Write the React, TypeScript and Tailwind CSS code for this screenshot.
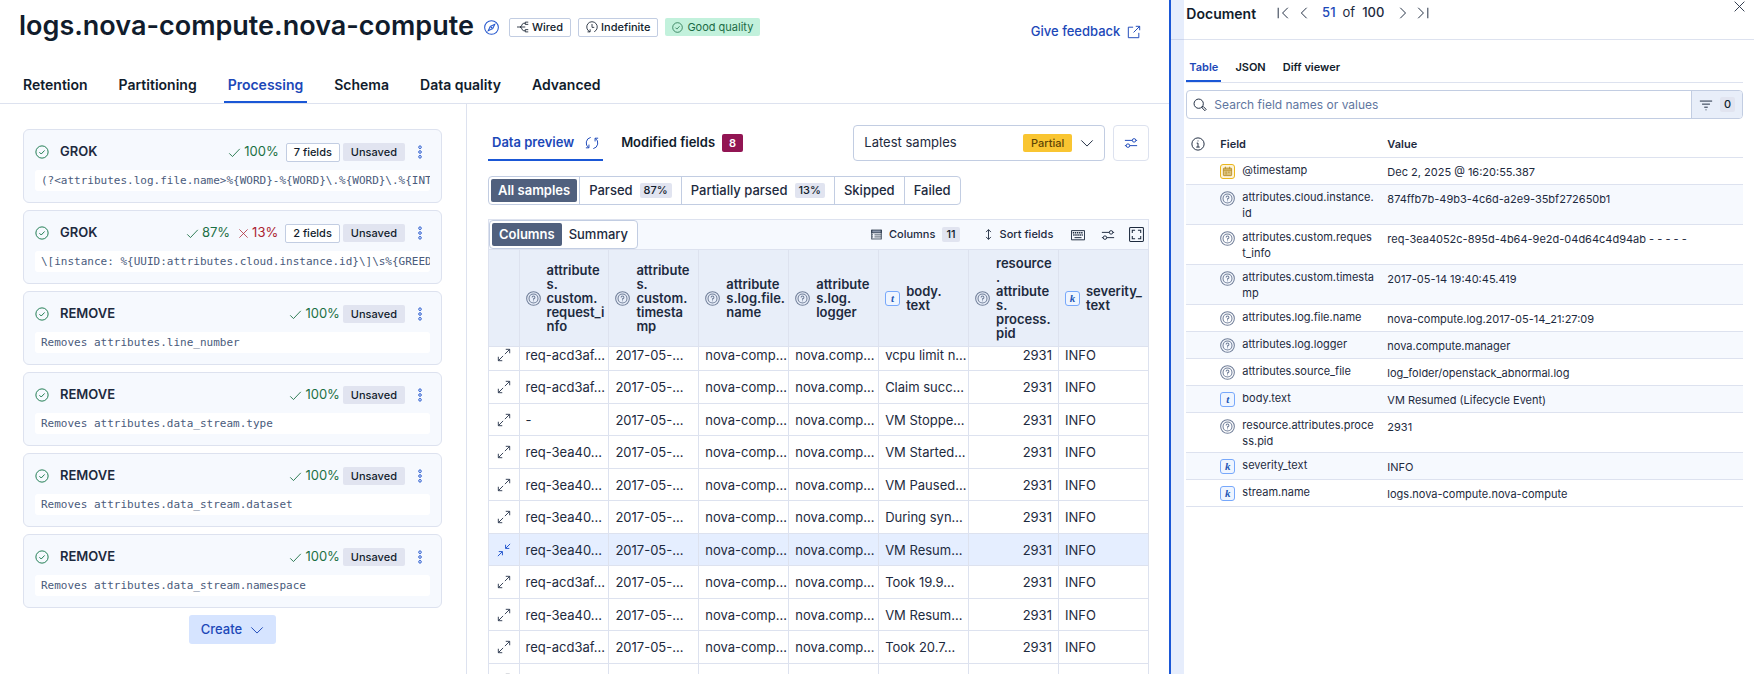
import type { ReactNode, SVGProps } from "react";

const steps = [
    { type: "GROK", parsed: "100%", failed: "", fields: "7 fields", detail: "(?<attributes.log.file.name>%{WORD}-%{WORD}\\.%{WORD}\\.%{INT" },
    { type: "GROK", parsed: "87%", failed: "13%", fields: "2 fields", detail: "\\[instance: %{UUID:attributes.cloud.instance.id}\\]\\s%{GREED" },
    { type: "REMOVE", parsed: "100%", failed: "", fields: "", detail: "Removes attributes.line_number" },
    { type: "REMOVE", parsed: "100%", failed: "", fields: "", detail: "Removes attributes.data_stream.type" },
    { type: "REMOVE", parsed: "100%", failed: "", fields: "", detail: "Removes attributes.data_stream.dataset" },
    { type: "REMOVE", parsed: "100%", failed: "", fields: "", detail: "Removes attributes.data_stream.namespace" },
];

const columns = [
    { label: "attribute\ns.\ncustom.\nrequest_i\nnfo", kind: "unknown" },
    { label: "attribute\ns.\ncustom.\ntimesta\nmp", kind: "unknown" },
    { label: "attribute\ns.log.file.\nname", kind: "unknown" },
    { label: "attribute\ns.log.\nlogger", kind: "unknown" },
    { label: "body.\ntext", kind: "t" },
    { label: "resource\n.\nattribute\ns.\nprocess.\npid", kind: "unknown" },
    { label: "severity_\ntext", kind: "k" },
];

const rows = [
    { id: 1, request: "req-acd3af…", body: "vcpu limit n…" },
    { id: 2, request: "req-acd3af…", body: "Claim succ…" },
    { id: 3, request: "-", body: "VM Stoppe…" },
    { id: 4, request: "req-3ea40…", body: "VM Started…" },
    { id: 5, request: "req-3ea40…", body: "VM Paused…" },
    { id: 6, request: "req-3ea40…", body: "During syn…" },
    { id: 7, request: "req-3ea40…", body: "VM Resum…", selected: true },
    { id: 8, request: "req-acd3af…", body: "Took 19.9…" },
    { id: 9, request: "req-3ea40…", body: "VM Resum…" },
    { id: 10, request: "req-acd3af…", body: "Took 20.7…" },
    { id: 11, request: "req-acd3af…", body: "Auditing lo…" },
];

const documentFields = [
    { name: "@timestamp", value: "Dec 2, 2025 @ 16:20:55.387", kind: "date" },
    { name: "attributes.cloud.instance.\nid", value: "874ffb7b-49b3-4c6d-a2e9-35bf272650b1", kind: "unknown" },
    { name: "attributes.custom.reques\nt_info", value: "req-3ea4052c-895d-4b64-9e2d-04d64c4d94ab - - - - -", kind: "unknown" },
    { name: "attributes.custom.timesta\nmp", value: "2017-05-14 19:40:45.419", kind: "unknown" },
    { name: "attributes.log.file.name", value: "nova-compute.log.2017-05-14_21:27:09", kind: "unknown" },
    { name: "attributes.log.logger", value: "nova.compute.manager", kind: "unknown" },
    { name: "attributes.source_file", value: "log_folder/openstack_abnormal.log", kind: "unknown" },
    { name: "body.text", value: "VM Resumed (Lifecycle Event)", kind: "t" },
    { name: "resource.attributes.proce\nss.pid", value: "2931", kind: "unknown" },
    { name: "severity_text", value: "INFO", kind: "k" },
    { name: "stream.name", value: "logs.nova-compute.nova-compute", kind: "k" },
];

const Icon = ({ children, ...props }: SVGProps<SVGSVGElement>) => (
    <svg viewBox="0 0 16 16" width="14" height="14" fill="none" stroke="currentColor" strokeWidth="1.1" className="shrink-0" aria-hidden="true" {...props}>
        {children}
    </svg>
);

const CheckCircle = ({ size = 14 }: { size?: number }) => (
    <Icon width={size} height={size}>
        <circle cx="8" cy="8" r="7" />
        <path d="M5 8.2 7.1 10.3 11 6.2" />
    </Icon>
);

const Check = () => (
    <Icon width="13" height="13"><path d="M1.5 9 5.5 13 14.5 3.5" /></Icon>
);

const Cross = ({ size = 11 }: { size?: number }) => (
    <Icon width={size} height={size}><path d="M2 2 14 14M14 2 2 14" /></Icon>
);

const ChevronDown = () => (
    <Icon><path d="M1.5 5 8 11.5 14.5 5" /></Icon>
);

const Sliders = () => (
    <Icon>
        <path d="M1 5h8.500M13.500 5H15M1 11h1.500M6.500 11H15" />
        <circle cx="11.500" cy="5" r="2" />
        <circle cx="4.500" cy="11" r="2" />
    </Icon>
);

const Expand = () => (
    <Icon>
        <path d="M9 7 14.500 1.500M10 1.500h4.500V6M7 9 1.500 14.500M1.500 10v4.500H6" />
    </Icon>
);

const Collapse = () => (
    <Icon>
        <path d="M15 1 10 6M9.800 2v4.200H14M1 15 6 10M2 9.800h4.200V14" />
    </Icon>
);

const FieldIcon = ({ kind }: { kind: string }) => {
    if (kind === "unknown") {
        return (
            <Icon width="15" height="15" className="shrink-0 text-[#6f7d98]">
                <circle cx="8" cy="8" r="7.300" />
                <circle cx="8" cy="8" r="4.800" />
                <path d="M6.500 6.800a1.500 1.500 0 1 1 1.500 1.500v1M8 10v1" />
            </Icon>
        );
    }
    if (kind === "date") {
        return (
            <span className="flex size-[15px] shrink-0 items-center justify-center rounded-[3px] border border-[#eab61c] bg-[#fdf3d8] text-[#b08415]">
                <Icon width="11" height="11">
                    <rect x="2" y="3" width="12" height="11" rx="1" fill="#dcc27c" />
                    <path d="M2 6h12M5 1v3M11 1v3M5 9h2M9 9h2M5 11.500h2" />
                </Icon>
            </span>
        );
    }
    return (
        <span className="flex size-[15px] shrink-0 items-center justify-center rounded-[3px] border border-[#77a8fb] bg-[#eff5ff] font-['Liberation_Serif',serif] text-[11px] leading-none font-bold text-[#1d56b5] italic">
            {kind}
        </span>
    );
};

const Badge = ({ children }: { children: ReactNode }) => (
    <span className="flex h-[18px] items-center rounded-[2px] bg-[#e1e4f0] px-2 text-[11px] font-medium text-[#111c2c]">{children}</span>
);

const OutlineBadge = ({ children }: { children: ReactNode }) => (
    <span className="flex h-[19px] items-center gap-[3px] rounded-[2px] border border-[#c2cde2] bg-white px-[7px] text-[11px] font-medium text-[#111c2c]">{children}</span>
);

const Count = ({ children }: { children: ReactNode }) => (
    <span className="flex h-[15px] items-center rounded-[2px] bg-[#e1e4f0] px-1 text-[11px] font-medium text-[#111c2c]">{children}</span>
);

const StepCard = ({ step }: { step: (typeof steps)[number] }) => (
    <li className="rounded-md border border-[#dde2ef] bg-[#f6f9fe] px-[11px] pt-[13px] pb-[11px]">
        <div className="flex h-[18px] items-center pr-[3px]">
            <span className="text-[#1b7a4e]"><CheckCircle /></span>
            <span className="ml-[11px] flex-1 text-[13px] font-semibold">{step.type}</span>
            <span className="flex items-center gap-[3px] text-[13px] text-[#1b7044]"><Check /> {step.parsed}</span>
            {step.failed && (
                <span className="ml-2 flex items-center gap-[3px] text-[13px] text-[#ab2231]"><Cross /> {step.failed}</span>
            )}
            {step.fields && <span className="ml-[7px]"><OutlineBadge>{step.fields}</OutlineBadge></span>}
            <span className="ml-[3px]"><Badge>Unsaved</Badge></span>
            <button type="button" aria-label="Step actions" className="ml-2 text-[#2255cd]">
                <Icon>
                    <circle cx="8" cy="2.500" r="1.500" />
                    <circle cx="8" cy="8" r="1.500" />
                    <circle cx="8" cy="13.500" r="1.500" />
                </Icon>
            </button>
        </div>
        <div className="mt-[9px] h-[21px] overflow-hidden rounded-[3px] bg-white pl-[6px] font-['DejaVu_Sans_Mono',monospace] text-[11px] leading-[21px] whitespace-nowrap text-[#4a5b7c]">
            {step.detail}
        </div>
    </li>
);

export default function App() {
    return (
        <div className="flex h-screen overflow-hidden bg-white font-['Inter',sans-serif] text-[13px] text-[#1d2a3e]">
            <main className="flex min-w-0 flex-1 flex-col">
                <header className="flex items-start justify-between pr-[28px] pl-[19px]">
                    <div className="flex h-[54px] items-center">
                        <h1 className="pb-[2px] text-[27px] font-semibold text-[#111c2c]">logs.nova-compute.nova-compute</h1>
                        <a href="#discover" aria-label="Open in Discover" className="ml-[10px] text-[#2255cd]">
                            <Icon width="15" height="15">
                                <circle cx="8" cy="8" r="7.300" />
                                <path d="M11.500 4.500 9.300 9.300 4.500 11.500 6.700 6.700z" />
                                <circle cx="8" cy="8" r=".5" />
                            </Icon>
                        </a>
                        <div className="ml-[10px] flex items-center gap-[7px]">
                            <OutlineBadge>
                                <Icon width="12" height="12">
                                    <path d="M0 8h4M4 8c3 0 2-5 5-5h2M4 8h7M4 8c3 0 2 5 5 5h2" />
                                    <path d="M15 1.500h-4v3h4M15 11.500h-4v3h4" />
                                </Icon>
                                Wired
                            </OutlineBadge>
                            <OutlineBadge>
                                <Icon width="12" height="12">
                                    <path d="M5 14.300a7 7 0 1 1 6 0M8 4v4.500h3M2 14.500H5.500V11" />
                                </Icon>
                                Indefinite
                            </OutlineBadge>
                            <span className="flex h-[18px] items-center gap-1 rounded-[2px] bg-[#c2f1dc] px-[7px] text-[11px] text-[#1b6b45]">
                                <CheckCircle size={11} />
                                Good quality
                            </span>
                        </div>
                    </div>
                    <a href="#feedback" className="mt-[22px] flex items-center gap-[7px] font-medium text-[#1c48b8]">
                        Give feedback
                        <Icon>
                            <path d="M7 2.500H1.500v12h12V9M10 1.500h4.500V6M14.500 1.500 7.500 8.500" />
                        </Icon>
                    </a>
                </header>

                <nav className="mt-[13px] flex h-[37px] shrink-0 gap-[23px] border-b border-[#dde2ef] pl-[19px] text-[14px] font-semibold text-[#111c2c]">
                    {["Retention", "Partitioning", "Processing", "Schema", "Data quality", "Advanced"].map((tab) => (
                        <a
                            key={tab}
                            href={`#${tab}`}
                            className={`flex items-center border-b-2 px-1 ${tab === "Processing" ? "border-[#1a57d6] text-[#1c48b8]" : "border-transparent"}`}
                        >
                            {tab}
                        </a>
                    ))}
                </nav>

                <div className="flex min-h-0 flex-1">
                    {/* Processing steps */}
                    <section className="w-[467px] shrink-0 border-r border-[#dde2ef] pt-[25px] pr-6 pl-[23px]">
                        <ul className="flex flex-col gap-[7px]">
                            {steps.map((step) => (
                                <StepCard key={step.detail} step={step} />
                            ))}
                        </ul>
                        <div className="mt-[7px] flex justify-center">
                            <button type="button" className="flex h-[29px] items-center gap-2 rounded-[3px] bg-[#d6e4ff] px-3 font-medium text-[#1c48b8]">
                                Create
                                <ChevronDown />
                            </button>
                        </div>
                    </section>

                    {/* Data preview */}
                    <section className="flex min-w-0 flex-1 flex-col pt-[21px] pr-5 pl-[21px]">
                        <div className="flex h-9 shrink-0 items-center">
                            <div className="flex gap-[14px] self-stretch font-semibold">
                                <a href="#preview" className="flex items-center gap-[11px] border-b-2 border-[#1a57d6] px-1 pt-[2px] text-[#1c48b8]">
                                    Data preview
                                    <Icon>
                                        <path d="M6.500 1.600A6.500 6.500 0 0 0 4.200 13.300M4.500 9.800v3.700H1M9.500 14.400A6.500 6.500 0 0 0 11.800 2.700M11.500 6.200V2.500H15" />
                                    </Icon>
                                </a>
                                <a href="#modified" className="flex items-center gap-[7px] border-b-2 border-transparent px-1 pt-[2px] text-[#111c2c]">
                                    Modified fields
                                    <span className="flex h-[18px] items-center rounded-[2px] bg-[#921553] px-[7px] text-[11px] text-white">8</span>
                                </a>
                            </div>
                            <button type="button" className="ml-auto flex h-9 w-[252px] items-center rounded border border-[#c2cde2] px-[10px]">
                                Latest samples
                                <span className="mr-2 ml-auto flex h-[18px] items-center rounded-[2px] bg-[#f9c531] px-2 text-[11px] font-medium text-[#5f4505]">Partial</span>
                                <ChevronDown />
                            </button>
                            <button type="button" aria-label="Sampling options" className="ml-2 flex size-9 items-center justify-center rounded border border-[#dde2ef] text-[#1c48b8]">
                                <Sliders />
                            </button>
                        </div>

                        <div className="mt-[15px] flex h-[29px] shrink-0 self-start rounded border border-[#c2cde2] font-medium">
                            <button type="button" className="m-[2px] rounded-[2px] bg-[#50607e] px-[7px] font-semibold text-white">All samples</button>
                            <button type="button" className="flex items-center gap-[7px] border-l border-[#c2cde2] px-[9px]">Parsed <Count>87%</Count></button>
                            <button type="button" className="flex items-center gap-[7px] border-l border-[#c2cde2] px-[9px]">Partially parsed <Count>13%</Count></button>
                            <button type="button" className="border-l border-[#c2cde2] px-[9px]">Skipped</button>
                            <button type="button" className="border-l border-[#c2cde2] px-[9px]">Failed</button>
                        </div>

                        <div className="mt-[14px] border border-[#dde2ef]">
                            <div className="flex h-[29px] items-center bg-[#f6f9fe] pr-1 text-[11px] font-medium">
                                <div className="flex h-[29px] rounded border border-[#c2cde2] bg-white p-[2px] text-[13px]">
                                    <button type="button" className="rounded-[2px] bg-[#50607e] px-[7px] font-semibold text-white">Columns</button>
                                    <button type="button" className="px-[7px]">Summary</button>
                                </div>
                                <button type="button" className="ml-auto flex items-center gap-[7px]">
                                    <Icon width="11" height="11">
                                        <path d="M1 1.500h14v4H1z" fill="#8b96ab" />
                                        <path d="M1 8.500h2M5 8.500h10M1 11.500h2M5 11.500h10M1 14.500h14M1 1v14M15 1v14" />
                                    </Icon>
                                    Columns
                                    <Count>11</Count>
                                </button>
                                <button type="button" className="ml-[22px] flex items-center gap-[5px]">
                                    <Icon width="13" height="13"><path d="M8 2v12M5 5 8 2l3 3M5 11l3 3 3-3" /></Icon>
                                    Sort fields
                                </button>
                                <button type="button" aria-label="Keyboard shortcuts" className="ml-[18px]">
                                    <Icon>
                                        <path d="M.5 3h15v10.500H.5zM4 11h8" />
                                        <path d="M2 5.500h12M2.500 8h11" strokeDasharray="1.600 .8" strokeWidth="1.800" />
                                    </Icon>
                                </button>
                                <button type="button" aria-label="Display options" className="ml-4"><Sliders /></button>
                                <button type="button" aria-label="Full screen" className="ml-[14px]">
                                    <Icon width="15" height="15">
                                        <rect x=".6" y=".6" width="14.800" height="14.800" rx="1" />
                                        <path d="M3.500 6.500v-3h3M9.500 3.500h3v3M12.500 9.500v3h-3M6.500 12.500h-3v-3" />
                                    </Icon>
                                </button>
                            </div>

                            <table className="w-full table-fixed border-collapse">
                                <colgroup>
                                    <col className="w-[30px]" />
                                    {columns.map((column) => <col key={column.label} />)}
                                </colgroup>
                                <thead>
                                    <tr className="h-[97px] border-y border-[#dde2ef] bg-[#e8eef9]">
                                        <th aria-label="Expand" className="border-r border-[#dde2ef]" />
                                        {columns.map((column) => (
                                            <th key={column.label} className="border-r border-[#dde2ef] pl-[6px] text-left font-semibold last:border-r-0">
                                                <div className="flex items-center gap-[6px]">
                                                    <FieldIcon kind={column.kind} />
                                                    <span className="leading-[14px] whitespace-pre">{column.label}</span>
                                                </div>
                                            </th>
                                        ))}
                                    </tr>
                                </thead>
                                <tbody>
                                    {rows.map((row) => (
                                        <tr
                                            key={row.id}
                                            className={`h-8 border-b border-[#dde2ef] leading-4 first:h-6 first:align-top even:h-[33px] *:border-r *:border-[#dde2ef] *:px-[6px] *:whitespace-nowrap *:last:border-r-0 ${row.selected ? "bg-[#e5eeff]" : ""}`}
                                        >
                                            <td>
                                                <button type="button" aria-label="Toggle details" className={`flex h-4 w-full items-center justify-center ${row.selected ? "text-[#2255cd]" : "text-[#343f55]"}`}>
                                                    {row.selected ? <Collapse /> : <Expand />}
                                                </button>
                                            </td>
                                            <td>{row.request}</td>
                                            <td>2017-05-…</td>
                                            <td>nova-comp…</td>
                                            <td>nova.comp…</td>
                                            <td>{row.body}</td>
                                            <td className="text-right">2931</td>
                                            <td>INFO</td>
                                        </tr>
                                    ))}
                                </tbody>
                            </table>
                        </div>
                    </section>
                </div>
            </main>

            {/* Document flyout */}
            <aside className="flex w-1/3 shrink-0 border-l-2 border-[#1a57d6]">
                <div className="w-[13px] shrink-0 bg-[#e6edfc]">
                    <div className="h-10 border-b border-[#cdd6ec]" />
                </div>
                <div className="min-w-0 flex-1">
                    <div className="flex h-10 items-start justify-between border-b border-[#dde2ef] pr-2 pl-[2px]">
                        <div className="flex h-[26px] items-center">
                            <h2 className="text-[14px] font-semibold text-[#111c2c]">Document</h2>
                            <div className="ml-5 flex items-center gap-[7px]">
                                <button type="button" aria-label="First document"><Icon><path d="M2.500 2v12M13.500 2 7.500 8l6 6" /></Icon></button>
                                <button type="button" aria-label="Previous document"><Icon><path d="M11 2 5 8l6 6" /></Icon></button>
                                <span className="ml-1 font-medium text-[#1c48b8]">51</span>
                                <span>of</span>
                                <span className="mr-1 font-medium">100</span>
                                <button type="button" aria-label="Next document"><Icon><path d="M6 2l6 6-6 6" /></Icon></button>
                                <button type="button" aria-label="Last document"><Icon><path d="M13.500 2v12M2.500 2l6 6-6 6" /></Icon></button>
                            </div>
                        </div>
                        <button type="button" aria-label="Close"><Cross size={13} /></button>
                    </div>

                    <div className="pr-[11px] pl-[2px]">
                        <nav className="mt-3 flex h-[31px] gap-[11px] border-b border-[#dde2ef] text-[11px] font-semibold text-[#111c2c]">
                            <a href="#table" className="flex items-center border-b-2 border-[#1a57d6] px-[3px] pt-[2px] text-[#1c48b8]">Table</a>
                            <a href="#json" className="flex items-center border-b-2 border-transparent px-[3px] pt-[2px]">JSON</a>
                            <a href="#diff" className="flex items-center border-b-2 border-transparent px-[3px] pt-[2px]">Diff viewer</a>
                        </nav>

                        <div className="mt-[7px] flex h-[29px] overflow-hidden rounded border border-[#c2cde2]">
                            <label className="flex flex-1 items-center gap-[7px] px-[6px]">
                                <Icon>
                                    <circle cx="6.500" cy="6.500" r="5.300" />
                                    <path d="M10.300 10.300 11.500 9.500 15 13l-1.500 1.500-3.200-3.400z" />
                                </Icon>
                                <span className="sr-only">Search fields</span>
                                <input type="text" placeholder="Search field names or values" className="w-full text-[12px] outline-none placeholder:text-[#5f76a0]" />
                            </label>
                            <button type="button" aria-label="Filter by type" className="flex items-center gap-[7px] border-l border-[#c2cde2] bg-[#e8eef9] px-[7px]">
                                <Icon><path d="M1 3.500h14M3.500 7h9M6 10.500h4M7.500 13.500h1" /></Icon>
                                <Count>0</Count>
                            </button>
                        </div>

                        <table className="mt-3 w-full table-fixed border-collapse text-[11px] leading-4">
                            <colgroup>
                                <col className="w-[34px]" />
                                <col className="w-[167px]" />
                                <col />
                            </colgroup>
                            <thead>
                                <tr className="h-[26px] border-b border-[#dde2ef] text-left">
                                    <th aria-label="Info" className="pl-[5px]"><Icon><circle cx="8" cy="8" r="7" /><path d="M6.500 7H8v4.500M6 11.500h4M7.500 4.500h1" /></Icon></th>
                                    <th className="font-semibold">Field</th>
                                    <th className="font-semibold">Value</th>
                                </tr>
                            </thead>
                            <tbody>
                                {documentFields.map((field) => (
                                    <tr key={field.name} className="border-b border-[#dde2ef] align-top even:bg-[#f6f9fe]">
                                        <td />
                                        <td className="pt-1 pb-[3px]">
                                            <div className="flex gap-[7px]">
                                                <span className="pt-[2px]"><FieldIcon kind={field.kind} /></span>
                                                <span className="whitespace-pre">{field.name}</span>
                                            </div>
                                        </td>
                                        <td className="pt-[6px] pb-1">{field.value}</td>
                                    </tr>
                                ))}
                            </tbody>
                        </table>
                    </div>
                </div>
            </aside>
        </div>
    );
}
